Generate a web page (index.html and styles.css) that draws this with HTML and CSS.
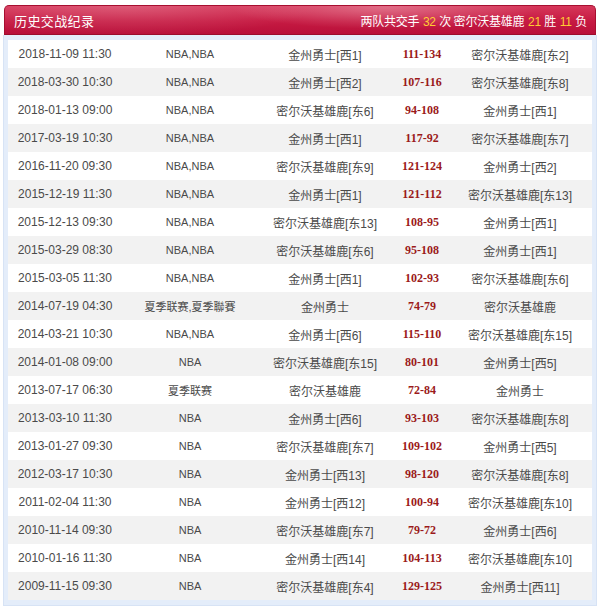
FILE: index.html
```html
<!DOCTYPE html>
<html lang="zh">
<head>
<meta charset="utf-8">
<title>历史交战纪录</title>
<link rel="stylesheet" href="styles.css">
</head>
<body>
<div class="box">
  <div class="head">
    <div class="title">历史交战纪录</div>
    <div class="summary">两队共交手 <b>32</b> 次 密尔沃基雄鹿 <b>21</b> 胜 <b>11</b> 负</div>
  </div>
  <div class="panel">
    <div class="row"><span class="c-date">2018-11-09 11:30</span><span class="c-comp">NBA,NBA</span><span class="c-home">金州勇士[西1]</span><span class="c-score">111-134</span><span class="c-away">密尔沃基雄鹿[东2]</span></div>
    <div class="row alt"><span class="c-date">2018-03-30 10:30</span><span class="c-comp">NBA,NBA</span><span class="c-home">金州勇士[西2]</span><span class="c-score">107-116</span><span class="c-away">密尔沃基雄鹿[东8]</span></div>
    <div class="row"><span class="c-date">2018-01-13 09:00</span><span class="c-comp">NBA,NBA</span><span class="c-home">密尔沃基雄鹿[东6]</span><span class="c-score">94-108</span><span class="c-away">金州勇士[西1]</span></div>
    <div class="row alt"><span class="c-date">2017-03-19 10:30</span><span class="c-comp">NBA,NBA</span><span class="c-home">金州勇士[西1]</span><span class="c-score">117-92</span><span class="c-away">密尔沃基雄鹿[东7]</span></div>
    <div class="row"><span class="c-date">2016-11-20 09:30</span><span class="c-comp">NBA,NBA</span><span class="c-home">密尔沃基雄鹿[东9]</span><span class="c-score">121-124</span><span class="c-away">金州勇士[西2]</span></div>
    <div class="row alt"><span class="c-date">2015-12-19 11:30</span><span class="c-comp">NBA,NBA</span><span class="c-home">金州勇士[西1]</span><span class="c-score">121-112</span><span class="c-away">密尔沃基雄鹿[东13]</span></div>
    <div class="row"><span class="c-date">2015-12-13 09:30</span><span class="c-comp">NBA,NBA</span><span class="c-home">密尔沃基雄鹿[东13]</span><span class="c-score">108-95</span><span class="c-away">金州勇士[西1]</span></div>
    <div class="row alt"><span class="c-date">2015-03-29 08:30</span><span class="c-comp">NBA,NBA</span><span class="c-home">密尔沃基雄鹿[东6]</span><span class="c-score">95-108</span><span class="c-away">金州勇士[西1]</span></div>
    <div class="row"><span class="c-date">2015-03-05 11:30</span><span class="c-comp">NBA,NBA</span><span class="c-home">金州勇士[西1]</span><span class="c-score">102-93</span><span class="c-away">密尔沃基雄鹿[东6]</span></div>
    <div class="row alt"><span class="c-date">2014-07-19 04:30</span><span class="c-comp">夏季联赛,夏季聯賽</span><span class="c-home">金州勇士</span><span class="c-score">74-79</span><span class="c-away">密尔沃基雄鹿</span></div>
    <div class="row"><span class="c-date">2014-03-21 10:30</span><span class="c-comp">NBA,NBA</span><span class="c-home">金州勇士[西6]</span><span class="c-score">115-110</span><span class="c-away">密尔沃基雄鹿[东15]</span></div>
    <div class="row alt"><span class="c-date">2014-01-08 09:00</span><span class="c-comp">NBA</span><span class="c-home">密尔沃基雄鹿[东15]</span><span class="c-score">80-101</span><span class="c-away">金州勇士[西5]</span></div>
    <div class="row"><span class="c-date">2013-07-17 06:30</span><span class="c-comp">夏季联赛</span><span class="c-home">密尔沃基雄鹿</span><span class="c-score">72-84</span><span class="c-away">金州勇士</span></div>
    <div class="row alt"><span class="c-date">2013-03-10 11:30</span><span class="c-comp">NBA</span><span class="c-home">金州勇士[西6]</span><span class="c-score">93-103</span><span class="c-away">密尔沃基雄鹿[东8]</span></div>
    <div class="row"><span class="c-date">2013-01-27 09:30</span><span class="c-comp">NBA</span><span class="c-home">密尔沃基雄鹿[东7]</span><span class="c-score">109-102</span><span class="c-away">金州勇士[西5]</span></div>
    <div class="row alt"><span class="c-date">2012-03-17 10:30</span><span class="c-comp">NBA</span><span class="c-home">金州勇士[西13]</span><span class="c-score">98-120</span><span class="c-away">密尔沃基雄鹿[东8]</span></div>
    <div class="row"><span class="c-date">2011-02-04 11:30</span><span class="c-comp">NBA</span><span class="c-home">金州勇士[西12]</span><span class="c-score">100-94</span><span class="c-away">密尔沃基雄鹿[东10]</span></div>
    <div class="row alt"><span class="c-date">2010-11-14 09:30</span><span class="c-comp">NBA</span><span class="c-home">密尔沃基雄鹿[东7]</span><span class="c-score">79-72</span><span class="c-away">金州勇士[西6]</span></div>
    <div class="row"><span class="c-date">2010-01-16 11:30</span><span class="c-comp">NBA</span><span class="c-home">金州勇士[西14]</span><span class="c-score">104-113</span><span class="c-away">密尔沃基雄鹿[东10]</span></div>
    <div class="row alt"><span class="c-date">2009-11-15 09:30</span><span class="c-comp">NBA</span><span class="c-home">密尔沃基雄鹿[东4]</span><span class="c-score">129-125</span><span class="c-away">金州勇士[西11]</span></div>
  </div>
</div>
</body>
</html>
```

FILE: styles.css
```css
html, body {
  margin: 0;
  padding: 0;
  background: #ffffff;
}

body {
  font-family: "Liberation Sans", "Noto Sans CJK SC", sans-serif;
  font-size: 12px;
  color: #4a4a4a;
}

.box {
  width: 592px;
  margin: 5px 0 0 4px;
}

.head {
  height: 30px;
  box-sizing: border-box;
  display: flex;
  align-items: center;
  justify-content: space-between;
  padding: 0 8px 0 9px;
  border-radius: 5px 5px 0 0;
  border: 1px solid #a70f30;
  border-bottom-color: #9c0d2c;
  background:
    radial-gradient(ellipse 220px 30px at 380px 2px, rgba(255, 255, 255, 0.28), rgba(255, 255, 255, 0) 70%),
    radial-gradient(ellipse 260px 40px at 120px 0px, rgba(255, 255, 255, 0.18), rgba(255, 255, 255, 0) 75%),
    linear-gradient(#d6375a, #c61a42 55%, #b9103a);
  color: #ffffff;
}

.title {
  font-family: "Noto Sans CJK SC", sans-serif;
  font-size: 13px;
  letter-spacing: 0.4px;
  padding-top: 1px;
}

.summary {
  font-family: "Noto Sans CJK SC", sans-serif;
  font-size: 12px;
  padding-top: 1px;
  letter-spacing: -0.2px;
}

.summary b {
  font-family: "Liberation Sans", sans-serif;
  font-weight: normal;
  color: #ffcc33;
  padding: 0 1px;
}

.panel {
  background: #e4edfa;
  padding: 5px 4px 5px 4px;
  border: 1px solid #d7e3f5;
  border-top: none;
  margin: 0 -1px 0 -1px;
}

.row {
  display: grid;
  grid-template-columns: 114px 136px 138px 52px 144px;
  height: 28px;
  align-items: center;
  background: #ffffff;
  white-space: nowrap;
}

.row.alt {
  background: #f2f2f2;
}

.row span {
  text-align: center;
}

.c-comp {
  font-size: 11px;
}

.c-home {
  padding-right: 4px;
}

.c-score {
  font-family: "Liberation Serif", serif;
  font-weight: bold;
  color: #9b1a1a;
  display: flex;
  justify-content: center;
}
```
